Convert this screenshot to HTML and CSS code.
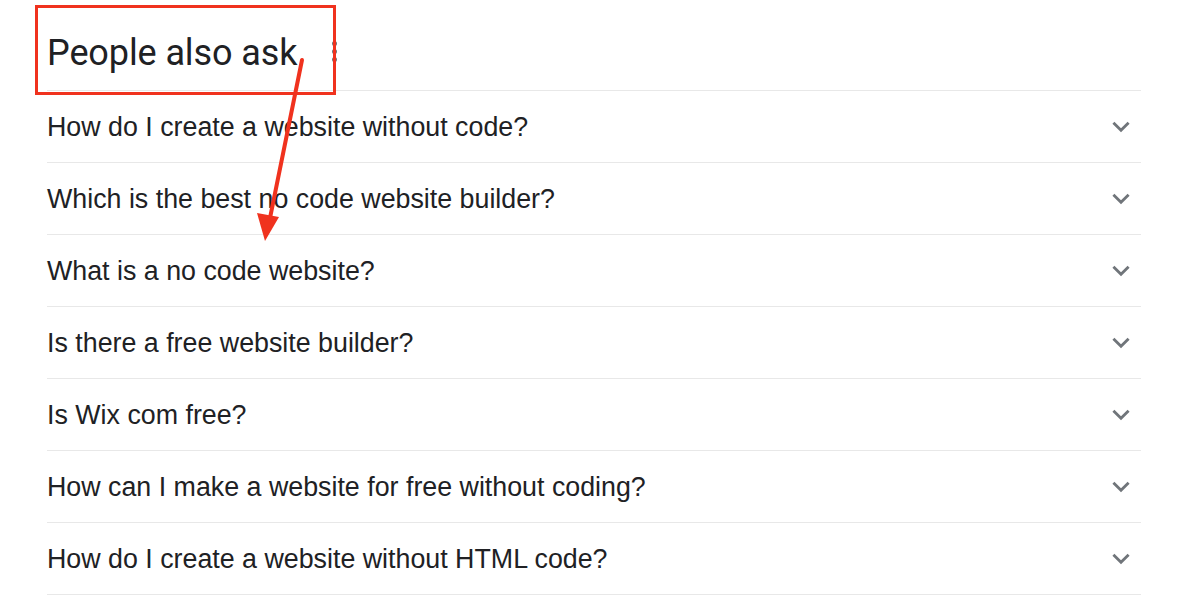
FILE: index.html
```html
<!DOCTYPE html>
<html>
<head>
<meta charset="utf-8">
<link rel="stylesheet" href="styles.css">
</head>
<body>
<div class="page">
  <div class="paa">
    <div class="paa-head">
      <h2 class="paa-title">People also ask</h2>
      <span class="more-dots" aria-hidden="true"><i></i><i></i><i></i></span>
    </div>
    <div class="q-row"><span class="q-text">How do I create a website without code?</span><svg class="chev" viewBox="0 0 24 24"><path d="M5 9l7 7 7-7"/></svg></div>
    <div class="q-row"><span class="q-text">Which is the best no code website builder?</span><svg class="chev" viewBox="0 0 24 24"><path d="M5 9l7 7 7-7"/></svg></div>
    <div class="q-row"><span class="q-text">What is a no code website?</span><svg class="chev" viewBox="0 0 24 24"><path d="M5 9l7 7 7-7"/></svg></div>
    <div class="q-row"><span class="q-text">Is there a free website builder?</span><svg class="chev" viewBox="0 0 24 24"><path d="M5 9l7 7 7-7"/></svg></div>
    <div class="q-row"><span class="q-text">Is Wix com free?</span><svg class="chev" viewBox="0 0 24 24"><path d="M5 9l7 7 7-7"/></svg></div>
    <div class="q-row"><span class="q-text">How can I make a website for free without coding?</span><svg class="chev" viewBox="0 0 24 24"><path d="M5 9l7 7 7-7"/></svg></div>
    <div class="q-row q-last"><span class="q-text">How do I create a website without HTML code?</span><svg class="chev" viewBox="0 0 24 24"><path d="M5 9l7 7 7-7"/></svg></div>
  </div>
  <div class="annot-box"></div>
  <svg class="annot-arrow" width="1200" height="601" viewBox="0 0 1200 601">
    <line x1="302" y1="60" x2="270" y2="218" stroke="#f0321e" stroke-width="4" stroke-linecap="round"/>
    <polygon points="265,241 257,213 279,217" fill="#f0321e"/>
  </svg>
</div>
</body>
</html>
```
FILE: styles.css
```css
html, body {
  margin: 0;
  padding: 0;
  background: #ffffff;
}
.page {
  position: relative;
  width: 1200px;
  height: 601px;
  overflow: hidden;
}
.paa {
  margin-left: 47px;
  width: 1094px;
}
.paa-head {
  height: 90px;
  display: flex;
  align-items: flex-start;
}
.paa-title {
  margin: 0;
  padding-top: 31px;
  font-family: Roboto, "Open Sans", sans-serif;
  font-weight: 400;
  font-size: 36px;
  line-height: 44px;
  color: #202124;
  letter-spacing: -0.1px;
}
.more-dots {
  display: flex;
  flex-direction: column;
  gap: 3px;
  margin-left: 35px;
  margin-top: 41px;
}
.more-dots i {
  display: block;
  width: 5px;
  height: 5px;
  border-radius: 50%;
  background: #70757a;
}
.q-row {
  height: 71px;
  border-top: 1px solid #e8e8e8;
  display: flex;
  align-items: center;
  justify-content: space-between;
}
.q-last {
  border-bottom: 1px solid #e8e8e8;
}
.q-text {
  font-family: "Liberation Sans", Arial, sans-serif;
  font-size: 26.8px;
  color: #202124;
  line-height: 32px;
}
.chev {
  width: 26px;
  height: 26px;
  margin-right: 7px;
  margin-top: -2px;
  fill: none;
  stroke: #70757a;
  stroke-width: 2.6;
}
.annot-box {
  position: absolute;
  left: 35px;
  top: 5px;
  width: 295px;
  height: 84px;
  border: 3px solid #f0321e;
}
.annot-arrow {
  position: absolute;
  left: 0;
  top: 0;
  pointer-events: none;
}
```
